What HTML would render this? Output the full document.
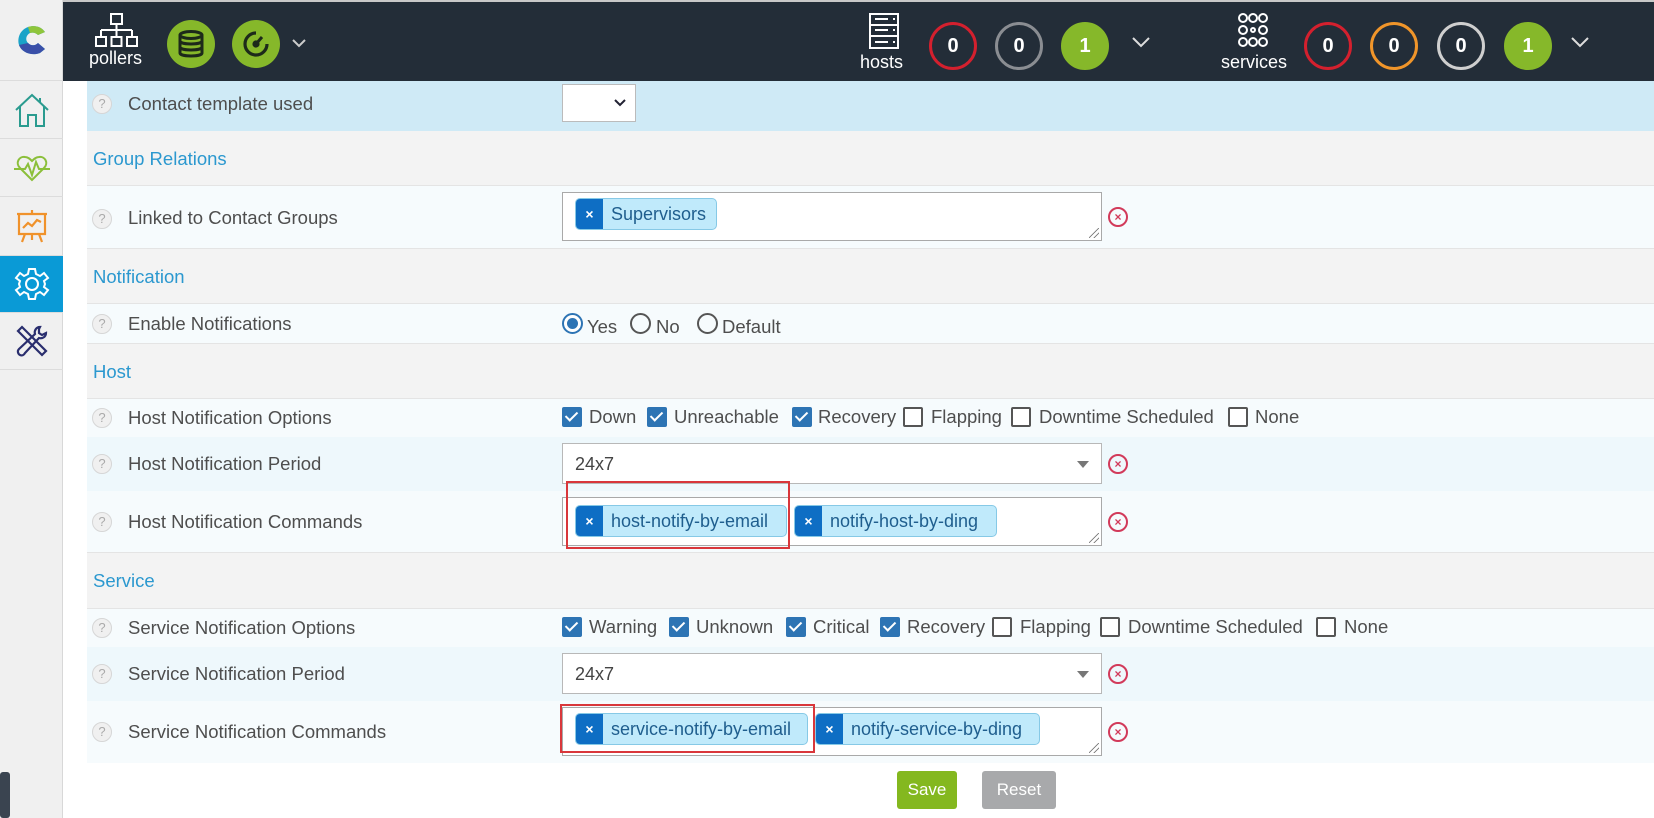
<!DOCTYPE html>
<html><head><meta charset="utf-8"><style>
*{box-sizing:border-box;margin:0;padding:0}
body{width:1654px;height:818px;overflow:hidden;background:#fff;font-family:"Liberation Sans",sans-serif;position:relative;color:#505050}
.a{position:absolute}
#top{left:63px;top:0;width:1591px;height:81px;background:#232d38;border-top:2px solid #c8c8c8}
#side{left:0;top:0;width:63px;height:818px;background:#f0f0f0;border-right:1px solid #d8d8d8}
.cell{position:absolute;left:0;width:63px;border-bottom:1px solid #dcdcdc;display:flex;align-items:center;justify-content:center}
.row{position:absolute;left:87px;width:1567px}
.sec{background:#f3f3f3;border-bottom:1px solid #e4e4e4}
.sec span{position:absolute;left:6px;color:#2b98cf;font-size:18.5px}
.fld{background:#f6fbfd}
.lab{position:absolute;left:41px;font-size:18.5px;color:#4e4e4e}
.q{position:absolute;left:5px;width:20px;height:20px;border-radius:50%;border:1.5px solid #d6d6d6;background:#f0f0f0;color:#aaa;font-size:13px;text-align:center;line-height:17px}
.ta{position:absolute;left:562px;width:540px;background:#fff;border:1px solid #a9a9a9}
.tag{position:absolute;height:32px;background:#c0eafb;border:1px solid #86c9e6;border-radius:5px;overflow:hidden;color:#1f5e8e;font-size:18px;line-height:30px}
.tag b{display:inline-block;width:27px;height:32px;background:#0e6ec4;color:#fff;text-align:center;font-size:14px;margin-right:8px;vertical-align:top;line-height:30px}
.rx{position:absolute;width:20px;height:20px;border:2px solid #d23a5a;border-radius:50%;color:#d23a5a;font-size:12px;font-weight:bold;text-align:center;line-height:16px}
.cb{position:absolute;width:20px;height:20px;border-radius:2px}
.cb.on{background:#2d74b4}
.cb.on:after{content:"";position:absolute;left:6px;top:2px;width:5px;height:10px;border:solid #fff;border-width:0 2px 2px 0;transform:rotate(45deg)}
.cb.off{border:2px solid #555;background:#fff}
.ct{position:absolute;font-size:18.5px;color:#4e4e4e}
.circ{position:absolute;top:20px;width:48px;height:48px;border-radius:50%;color:#fff;font-weight:bold;font-size:20px;text-align:center;line-height:42px;border:3px solid}
.sel{position:absolute;left:562px;width:540px;background:#fff;border:1px solid #b8b8b8;font-size:18px;color:#444;padding-left:12px}
.tri{position:absolute;right:12px;top:17px;border:6px solid transparent;border-top:7px solid #777;border-bottom:0}
.resz{position:absolute;right:2px;bottom:2px;width:10px;height:10px;background:linear-gradient(135deg,transparent 45%,#777 46%,#777 52%,transparent 53%,transparent 70%,#777 71%,#777 77%,transparent 78%)}
.redbox{position:absolute;border:2px solid #d9373b}
</style></head><body>

<div id="side" class="a">
 <div class="cell" style="top:0;height:81px">
  <svg width="36" height="36" viewBox="0 0 36 36"><path d="M31 10 C27 4 20 3 14 5 C6 8 3 16 5 23 C8 31 18 34 26 31 L31 27 L24 21 C21 24 17 24 14 21 C11 18 12 13 16 11 C19 10 22 11 24 13 Z" fill="#1aa3c8"/><path d="M5 23 C8 31 18 34 26 31 L31 27 L24 21 C21 24 17 24 14 21 Z" fill="#3a4fa8"/><path d="M31 10 C27 4 20 3 14 5 L16 11 C19 10 22 11 24 13Z" fill="#8fc53b"/></svg>
 </div>
 <div class="cell" style="top:81px;height:58px"><svg width="38" height="36" viewBox="0 0 38 36" fill="none" stroke="#2a9b8f" stroke-width="2"><path d="M3 18 L19 3 L35 18 M7 14 V34 H15 V23 H23 V34 H31 V14 M27 6 V10"/></svg></div>
 <div class="cell" style="top:139px;height:58px"><svg width="38" height="30" viewBox="0 0 38 30" fill="none" stroke="#8bbf3a" stroke-width="2"><path d="M19 27 L7 15 C2 10 6 3 12 4 C15 4 17 6 19 8 C21 6 23 4 26 4 C32 3 36 10 31 15 Z M1 16 H12 L15 11 L19 22 L23 9 L26 16 H37"/></svg></div>
 <div class="cell" style="top:197px;height:59px"><svg width="34" height="36" viewBox="0 0 34 36" fill="none" stroke="#f0922b" stroke-width="2.2"><path d="M2 6 H32 M4 6 V26 H30 V6 M17 2 V6 M10 26 L7 34 M24 26 L27 34 M17 26 V32 M8 20 L13 15 L17 18 L22 12 L26 14"/></svg></div>
 <div class="cell" style="top:256px;height:57px;background:#0a9ad6"><svg width="36" height="36" viewBox="0 0 36 36" fill="none" stroke="#fff" stroke-width="2"><circle cx="18" cy="18" r="6"/><path d="M15 3 H21 L22 8 L26 10 L30 7 L34 12 L30 15 L31 18 L30 21 L34 24 L30 29 L26 26 L22 28 L21 33 H15 L14 28 L10 26 L6 29 L2 24 L6 21 L5 18 L6 15 L2 12 L6 7 L10 10 L14 8 Z"/></svg></div>
 <div class="cell" style="top:313px;height:57px"><svg width="36" height="36" viewBox="0 0 36 36" fill="none" stroke="#2a2e6e" stroke-width="2.2"><path d="M4 8 L8 4 L32 28 L28 32 Z M26 4 C22 4 20 8 21 11 L5 26 C3 28 4 31 6 32 C8 33 10 32 11 30 L25 15 C28 16 32 14 32 10 L28 12 L25 10 L25 6 Z"/></svg></div>
 <div class="a" style="left:0;top:772px;width:10px;height:46px;background:#3a4450;border-radius:3px"></div>
</div>

<div id="top" class="a">
 <svg class="a" style="left:32px;top:10px" width="44" height="42" viewBox="0 0 44 42" fill="none" stroke="#fff" stroke-width="2"><rect x="16" y="2" width="11" height="10"/><path d="M21.5 12 V18 M6 18 H37 M6 18 V25 M21.5 18 V25 M37 18 V25"/><rect x="1" y="25" width="10" height="9"/><rect x="16.5" y="25" width="10" height="9"/><rect x="32" y="25" width="10" height="9"/></svg>
 <div class="a" style="left:26px;top:46px;color:#fff;font-size:18px">pollers</div>
 <div class="a" style="left:104px;top:18px;width:48px;height:48px;border-radius:50%;background:#86b82a"></div>
 <svg class="a" style="left:113px;top:27px" width="30" height="30" viewBox="0 0 30 30" fill="none" stroke="#1d2a1a" stroke-width="3"><ellipse cx="15" cy="6" rx="11" ry="3.5"/><path d="M4 6 V24 C4 28 26 28 26 24 V6 M4 12 C4 16 26 16 26 12 M4 18 C4 22 26 22 26 18"/></svg>
 <div class="a" style="left:169px;top:18px;width:48px;height:48px;border-radius:50%;background:#86b82a"></div>
 <svg class="a" style="left:177px;top:26px" width="32" height="32" viewBox="0 0 32 32" fill="none" stroke="#1d2a1a" stroke-width="3.2"><path d="M16 5 A11 11 0 1 0 27 16"/><path d="M16 16 L22 9" stroke-width="3"/><circle cx="16" cy="16" r="2" fill="#1d2a1a"/></svg>
 <svg class="a" style="left:228px;top:36px" width="16" height="10" viewBox="0 0 16 10"><path d="M2 2 L8 8 L14 2" stroke="#ccc" stroke-width="2" fill="none"/></svg>

 <svg class="a" style="left:805px;top:10px" width="32" height="38" viewBox="0 0 32 38" fill="none" stroke="#fff" stroke-width="2"><rect x="2" y="2" width="28" height="34"/><path d="M2 13 H30 M2 24 H30 M7 7 H20 M7 18 H20 M7 30 H20 M25 7 h2 M25 18 h2 M25 30 h2"/></svg>
 <div class="a" style="left:797px;top:50px;color:#fff;font-size:18px">hosts</div>
 <div class="circ" style="left:866px;border-color:#d4202e">0</div>
 <div class="circ" style="left:932px;border-color:#8a8d92">0</div>
 <div class="circ" style="left:998px;border-color:#86b82a;background:#86b82a">1</div>
 <svg class="a" style="left:1068px;top:34px" width="20" height="12" viewBox="0 0 20 12"><path d="M2 2 L10 10 L18 2" stroke="#ddd" stroke-width="2" fill="none"/></svg>

 <svg class="a" style="left:1172px;top:10px" width="36" height="36" viewBox="0 0 36 36" fill="none" stroke="#fff" stroke-width="2"><circle cx="8" cy="6" r="4"/><circle cx="18" cy="6" r="4"/><circle cx="28" cy="6" r="4"/><circle cx="8" cy="18" r="4"/><circle cx="28" cy="18" r="4"/><circle cx="8" cy="30" r="4"/><circle cx="18" cy="30" r="4"/><circle cx="28" cy="30" r="4"/><circle cx="18" cy="18" r="2"/></svg>
 <div class="a" style="left:1158px;top:50px;color:#fff;font-size:18px">services</div>
 <div class="circ" style="left:1241px;border-color:#d4202e">0</div>
 <div class="circ" style="left:1307px;border-color:#f0952a">0</div>
 <div class="circ" style="left:1374px;border-color:#cfcfcf">0</div>
 <div class="circ" style="left:1441px;border-color:#86b82a;background:#86b82a">1</div>
 <svg class="a" style="left:1507px;top:34px" width="20" height="12" viewBox="0 0 20 12"><path d="M2 2 L10 10 L18 2" stroke="#ddd" stroke-width="2" fill="none"/></svg>
</div>

<!-- rows -->
<div class="row" style="top:81px;height:50px;background:#cfeaf6"><div class="q" style="top:13px">?</div><div class="lab" style="top:12px">Contact template used</div>
 <div class="a" style="left:475px;top:3px;width:74px;height:38px;background:#fff;border:1px solid #bbb"></div>
 <svg class="a" style="left:527px;top:18px" width="12" height="8" viewBox="0 0 12 8"><path d="M1 1 L6 6 L11 1" stroke="#223" stroke-width="2" fill="none"/></svg>
</div>
<div class="row sec" style="top:131px;height:55px"><span style="top:17px">Group Relations</span></div>
<div class="row fld" style="top:186px;height:63px;border-bottom:1px solid #e4e4e4"><div class="q" style="top:23px">?</div><div class="lab" style="top:21px">Linked to Contact Groups</div></div>
<div class="row sec" style="top:249px;height:55px"><span style="top:17px">Notification</span></div>
<div class="row fld" style="top:304px;height:40px;border-bottom:1px solid #e4e4e4"><div class="q" style="top:10px">?</div><div class="lab" style="top:9px">Enable Notifications</div></div>
<div class="row sec" style="top:344px;height:55px"><span style="top:17px">Host</span></div>
<div class="row fld" style="top:399px;height:38px"><div class="q" style="top:9px">?</div><div class="lab" style="top:8px">Host Notification Options</div></div>
<div class="row" style="top:437px;height:54px;background:#eef8fc"><div class="q" style="top:17px">?</div><div class="lab" style="top:16px">Host Notification Period</div></div>
<div class="row fld" style="top:491px;height:62px;border-bottom:1px solid #e4e4e4"><div class="q" style="top:21px">?</div><div class="lab" style="top:20px">Host Notification Commands</div></div>
<div class="row sec" style="top:553px;height:56px"><span style="top:17px">Service</span></div>
<div class="row fld" style="top:609px;height:38px"><div class="q" style="top:9px">?</div><div class="lab" style="top:8px">Service Notification Options</div></div>
<div class="row" style="top:647px;height:54px;background:#eef8fc"><div class="q" style="top:17px">?</div><div class="lab" style="top:16px">Service Notification Period</div></div>
<div class="row fld" style="top:701px;height:62px"><div class="q" style="top:21px">?</div><div class="lab" style="top:20px">Service Notification Commands</div></div>

<!-- linked -->
<div class="ta" style="top:192px;height:49px"><div class="resz"></div></div>
<div class="tag" style="left:575px;top:198px;width:142px"><b>×</b>Supervisors</div>
<div class="rx" style="left:1108px;top:207px">×</div>

<!-- radios -->
<div class="a" style="left:562px;top:313px;width:21px;height:21px;border-radius:50%;border:2px solid #2d74b4;background:#fff"><div style="margin:3px;width:11px;height:11px;border-radius:50%;background:#2d74b4"></div></div>
<div class="ct" style="left:587px;top:316px">Yes</div>
<div class="a" style="left:630px;top:313px;width:21px;height:21px;border-radius:50%;border:2px solid #555"></div>
<div class="ct" style="left:656px;top:316px">No</div>
<div class="a" style="left:697px;top:313px;width:21px;height:21px;border-radius:50%;border:2px solid #555"></div>
<div class="ct" style="left:722px;top:316px">Default</div>

<!-- host options -->
<div class="cb on" style="left:562px;top:407px"></div><div class="ct" style="left:589px;top:406px">Down</div>
<div class="cb on" style="left:647px;top:407px"></div><div class="ct" style="left:674px;top:406px">Unreachable</div>
<div class="cb on" style="left:792px;top:407px"></div><div class="ct" style="left:818px;top:406px">Recovery</div>
<div class="cb off" style="left:903px;top:407px"></div><div class="ct" style="left:931px;top:406px">Flapping</div>
<div class="cb off" style="left:1011px;top:407px"></div><div class="ct" style="left:1039px;top:406px">Downtime Scheduled</div>
<div class="cb off" style="left:1228px;top:407px"></div><div class="ct" style="left:1255px;top:406px">None</div>

<div class="sel" style="top:443px;height:41px;line-height:40px">24x7<div class="tri"></div></div>
<div class="rx" style="left:1108px;top:454px">×</div>

<div class="ta" style="top:497px;height:49px"><div class="resz"></div></div>
<div class="tag" style="left:575px;top:505px;width:212px"><b>×</b>host-notify-by-email</div>
<div class="tag" style="left:794px;top:505px;width:203px"><b>×</b>notify-host-by-ding</div>
<div class="rx" style="left:1108px;top:512px">×</div>
<div class="redbox" style="left:566px;top:481px;width:224px;height:68px"></div>

<!-- service options -->
<div class="cb on" style="left:562px;top:617px"></div><div class="ct" style="left:589px;top:616px">Warning</div>
<div class="cb on" style="left:669px;top:617px"></div><div class="ct" style="left:696px;top:616px">Unknown</div>
<div class="cb on" style="left:786px;top:617px"></div><div class="ct" style="left:813px;top:616px">Critical</div>
<div class="cb on" style="left:880px;top:617px"></div><div class="ct" style="left:907px;top:616px">Recovery</div>
<div class="cb off" style="left:992px;top:617px"></div><div class="ct" style="left:1020px;top:616px">Flapping</div>
<div class="cb off" style="left:1100px;top:617px"></div><div class="ct" style="left:1128px;top:616px">Downtime Scheduled</div>
<div class="cb off" style="left:1316px;top:617px"></div><div class="ct" style="left:1344px;top:616px">None</div>

<div class="sel" style="top:653px;height:41px;line-height:40px">24x7<div class="tri"></div></div>
<div class="rx" style="left:1108px;top:664px">×</div>

<div class="ta" style="top:707px;height:49px"><div class="resz"></div></div>
<div class="tag" style="left:575px;top:713px;width:233px"><b>×</b>service-notify-by-email</div>
<div class="tag" style="left:815px;top:713px;width:225px"><b>×</b>notify-service-by-ding</div>
<div class="rx" style="left:1108px;top:722px">×</div>
<div class="redbox" style="left:560px;top:704px;width:255px;height:49px"></div>

<div class="a" style="left:897px;top:771px;width:60px;height:38px;background:#84b81f;border-radius:3px;color:#fff;font-size:17px;text-align:center;line-height:38px">Save</div>
<div class="a" style="left:982px;top:771px;width:74px;height:38px;background:#a8a9ab;border-radius:3px;color:#fff;font-size:17px;text-align:center;line-height:38px">Reset</div>
</body></html>
